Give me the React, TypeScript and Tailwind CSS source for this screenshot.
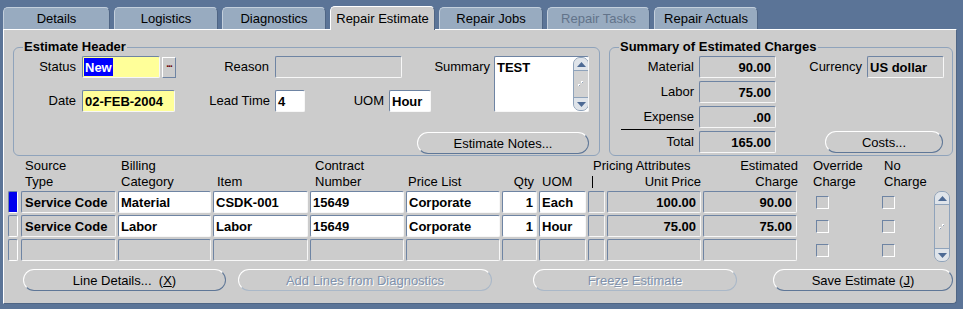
import React from "react";

type P = { className?: string; children?: React.ReactNode };

// inset text item (Oracle Forms look)
function Box({ className = "", children }: P) {
  return (
    <div
      className={`flex items-center overflow-hidden whitespace-nowrap rounded-[2px] border border-t-[#6e84a3] border-l-[#6e84a3] border-r-[#f7f7f7] border-b-[#f7f7f7] text-[13px] font-bold leading-none text-black ${className}`}
    >
      {children}
    </div>
  );
}

function Group({ title, className = "", children }: P & { title: string }) {
  return (
    <div className={`relative rounded-[6px] border border-[#8fa3bb] ${className}`}>
      <span className="absolute -top-[10px] left-[9px] bg-[#cccccc] px-[1px] text-[13px] font-bold leading-[18px]">
        {title}
      </span>
      {children}
    </div>
  );
}

function Btn({ className = "", disabled, children }: P & { disabled?: boolean }) {
  return (
    <div
      className={`flex h-[22px] items-center justify-center rounded-[11px] border text-[13px] leading-none ${
        disabled
          ? "border-t-white border-l-white border-r-[#aab8c8] border-b-[#aab8c8] text-[#8092ac] [text-shadow:1px_1px_0_#ffffff]"
          : "border-t-white border-l-white border-r-[#5f7797] border-b-[#5f7797] text-black"
      } ${className}`}
    >
      {children}
    </div>
  );
}

function Arrow({ down }: { down?: boolean }) {
  return (
    <svg width="9" height="5" viewBox="0 0 9 5">
      <path d={down ? "M0 0 L9 0 L4.5 5Z" : "M0 5 L4.5 0 L9 5Z"} fill="#4d6a94" />
    </svg>
  );
}

function Grip() {
  return (
    <svg width="6" height="6" viewBox="0 0 6 6">
      <rect x="3" y="0" width="2" height="2" fill="#ffffff" />
      <rect x="4" y="1" width="1" height="1" fill="#8fa3bb" />
      <rect x="0" y="3" width="2" height="2" fill="#ffffff" />
      <rect x="1" y="4" width="1" height="1" fill="#8fa3bb" />
    </svg>
  );
}

function Scroll({ className = "" }: P) {
  return (
    <div className={`flex w-[16px] flex-col rounded-[7px] border border-[#8fa3bb] bg-[#d2d2d2] ${className}`}>
      <div className="flex h-[13px] items-center justify-center rounded-t-[6px] border-b border-[#8fa3bb] bg-[#dfe4ea]">
        <Arrow />
      </div>
      <div className="flex flex-1 items-center justify-center">
        <Grip />
      </div>
      <div className="flex h-[13px] items-center justify-center rounded-b-[6px] border-t border-[#8fa3bb] bg-[#dfe4ea]">
        <Arrow down />
      </div>
    </div>
  );
}

function Check() {
  return (
    <div className="h-[13px] w-[13px] border border-t-[#6e84a3] border-l-[#6e84a3] border-r-white border-b-white bg-[#cccccc]" />
  );
}

const tabs = [
  { name: "Details", w: "w-[107px]" },
  { name: "Logistics", w: "w-[104px]" },
  { name: "Diagnostics", w: "w-[104px]" },
  { name: "Repair Estimate", w: "w-[105px]", active: true },
  { name: "Repair Jobs", w: "w-[104px]" },
  { name: "Repair Tasks", w: "w-[103px]", disabled: true },
  { name: "Repair Actuals", w: "w-[104px]" },
];

const lines = [
  ["Service Code", "Material", "CSDK-001", "15649", "Corporate", "1", "Each", "100.00", "90.00"],
  ["Service Code", "Labor", "Labor", "15649", "Corporate", "1", "Hour", "75.00", "75.00"],
];

export default function App() {
  return (
    <div className="h-[309px] w-[963px] overflow-hidden bg-[#5b7497] font-['Liberation_Sans',Arial,sans-serif] text-black">
      {/* tabs */}
      <div className="flex h-[29px] items-end gap-[4px] pl-[3px]">
        {tabs.map((t) =>
          t.active ? (
            <div
              key={t.name}
              className={`relative z-10 -mb-[1px] flex h-[24px] items-center justify-center rounded-t-[5px] border-t border-l border-r border-t-white border-l-white border-r-[#4f6584] bg-[#cccccc] text-[13px] ${t.w}`}
            >
              {t.name}
            </div>
          ) : (
            <div
              key={t.name}
              className={`flex h-[22px] items-center justify-center rounded-t-[5px] border-t border-l border-r border-t-[#c3cfdc] border-l-[#c3cfdc] border-r-[#4f6584] bg-[#98abc0] text-[13px] ${t.w} ${
                t.disabled ? "text-[#62738a]" : "text-black"
              }`}
            >
              {t.name}
            </div>
          )
        )}
      </div>

      {/* canvas */}
      <div className="ml-[3px] h-[275px] w-[954px] rounded-br-[4px] border border-t-white border-l-white border-r-[#4f6584] border-b-[#4f6584] bg-[#cccccc]">
        <div className="mt-[17px] flex">
          <Group title="Estimate Header" className="ml-[9px] h-[109px] w-[587px]">
            <div className="flex pt-[8px]">
              <div className="flex flex-col gap-[12px]">
                <div className="flex h-[22px] items-center text-[13px]">
                  <span className="w-[68px] pr-[6px] text-right">Status</span>
                  <Box className="h-[22px] w-[78px] bg-[#ffff99] py-[1px] pl-[1px]">
                    <span className="flex h-full items-center bg-[#0000ff] px-[1px] text-white">New</span>
                  </Box>
                  <div className="ml-[2px] flex h-[21px] w-[14px] items-start justify-center border border-t-white border-l-white border-r-[#6e84a3] border-b-[#6e84a3] pt-[2px] text-[10px] font-bold leading-[8px] tracking-[-1px] text-[#6b0000]">
                    ...
                  </div>
                  <span className="w-[99px] pr-[6px] text-right">Reason</span>
                  <Box className="h-[22px] w-[127px] bg-[#cccccc]" />
                  <span className="w-[92px] pr-[4px] text-right">Summary</span>
                </div>
                <div className="flex h-[22px] items-center text-[13px]">
                  <span className="w-[68px] pr-[6px] text-right">Date</span>
                  <Box className="h-[22px] w-[93px] bg-[#ffff99] pl-[2px]">02-FEB-2004</Box>
                  <span className="w-[100px] pr-[5px] text-right">Lead Time</span>
                  <Box className="h-[22px] w-[30px] bg-white pl-[2px]">4</Box>
                  <span className="w-[84px] pr-[5px] text-right">UOM</span>
                  <Box className="h-[22px] w-[42px] bg-white pl-[2px]">Hour</Box>
                </div>
              </div>
              <Box className="h-[56px] w-[95px] items-stretch bg-white">
                <div className="flex-1 pl-[2px] pt-[4px]">TEST</div>
                <Scroll className="mr-[-1px] rounded-[5px]" />
              </Box>
            </div>
            <div className="mt-[20px] flex justify-end pr-[10px]">
              <Btn className="h-[21px] w-[172px]">Estimate Notes...</Btn>
            </div>
          </Group>

          <Group title="Summary of Estimated Charges" className="ml-[9px] h-[109px] w-[344px]">
            <div className="flex flex-col gap-[3px] pt-[8px] text-[13px]">
              <div className="flex h-[22px] items-center">
                <span className="w-[89px] pr-[5px] text-right">Material</span>
                <Box className="h-[22px] w-[77px] justify-end bg-[#cccccc] pr-[4px]">90.00</Box>
                <span className="w-[91px] pr-[5px] text-right">Currency</span>
                <Box className="h-[22px] w-[77px] bg-[#cccccc] pl-[2px]">US dollar</Box>
              </div>
              <div className="flex h-[22px] items-center">
                <span className="w-[89px] pr-[5px] text-right">Labor</span>
                <Box className="h-[22px] w-[77px] justify-end bg-[#cccccc] pr-[4px]">75.00</Box>
              </div>
              <div className="flex h-[22px] items-start">
                <div className="flex h-[24px] w-[89px] justify-end pr-[5px]">
                  <span className="flex h-[24px] w-[73px] items-center justify-end border-b border-black pb-[1px]">Expense</span>
                </div>
                <Box className="h-[22px] w-[77px] justify-end bg-[#cccccc] pr-[4px]">.00</Box>
              </div>
              <div className="flex h-[22px] items-center">
                <span className="w-[89px] pr-[5px] text-right">Total</span>
                <Box className="h-[22px] w-[77px] justify-end bg-[#cccccc] pr-[4px]">165.00</Box>
                <Btn className="ml-[49px] h-[21px] w-[118px]">Costs...</Btn>
              </div>
            </div>
          </Group>
        </div>

        {/* multi-row block header */}
        <div className="mt-[2px] flex text-[13px] leading-[16px]">
          <div className="ml-[4px] mr-[3px] w-[10px]" />
          <div className="w-[95px] pl-[4px]">Source<br />Type</div>
          <div className="ml-[2px] w-[93px] pl-[3px]">Billing<br />Category</div>
          <div className="ml-[2px] w-[95px] pl-[4px]"><br />Item</div>
          <div className="ml-[2px] w-[94px] pl-[5px]">Contract<br />Number</div>
          <div className="ml-[2px] w-[94px] pl-[2px]"><br />Price List</div>
          <div className="ml-[2px] w-[35px] pr-[3px] text-right"><br />Qty</div>
          <div className="ml-[2px] w-[47px] pl-[3px]"><br />UOM</div>
          <div className="ml-[2px] w-[113px]">
            <div className="pl-[5px]">Pricing Attributes</div>
            <div className="flex h-[16px] items-center justify-between">
              <span className="ml-[4px] h-[12px] w-[1px] bg-black" />
              <span>Unit Price</span>
            </div>
          </div>
          <div className="ml-[2px] w-[95px] text-right">Estimated<br />Charge</div>
          <div className="ml-[15px] w-[68px]">Override<br />Charge</div>
          <div className="w-[50px] pl-[3px]">No<br />Charge</div>
        </div>

        <div className="mt-[1px] flex">
          <div className="flex flex-col gap-[2px]">
            {[0, 1, 2].map((i) => {
              const r = lines[i];
              const white = r ? "bg-white" : "bg-[#cccccc]";
              return (
                <div key={i} className="flex h-[22px] items-center">
                  <div
                    className={`ml-[4px] mr-[3px] h-[22px] w-[10px] rounded-[2px] border ${
                      i === 0
                        ? "border-t-[#6e84a3] border-l-[#6e84a3] border-r-white border-b-white bg-[#0000ee]"
                        : "border-t-[#6e84a3] border-l-[#6e84a3] border-r-white border-b-white bg-[#cccccc]"
                    }`}
                  />
                  <Box className="h-[22px] w-[95px] bg-[#cccccc] pl-[3px]">{r?.[0]}</Box>
                  <Box className={`ml-[2px] h-[22px] w-[93px] pl-[2px] ${white}`}>{r?.[1]}</Box>
                  <Box className={`ml-[2px] h-[22px] w-[95px] pl-[2px] ${white}`}>{r?.[2]}</Box>
                  <Box className={`ml-[2px] h-[22px] w-[94px] pl-[2px] ${white}`}>{r?.[3]}</Box>
                  <Box className={`ml-[2px] h-[22px] w-[94px] pl-[2px] ${white}`}>{r?.[4]}</Box>
                  <Box className={`ml-[2px] h-[22px] w-[35px] justify-end pr-[3px] ${white}`}>{r?.[5]}</Box>
                  <Box className={`ml-[2px] h-[22px] w-[47px] pl-[2px] ${white}`}>{r?.[6]}</Box>
                  <Box className="ml-[2px] h-[22px] w-[17px] bg-[#cccccc]" />
                  <Box className="ml-[2px] h-[22px] w-[94px] justify-end bg-[#cccccc] pr-[4px]">{r?.[7]}</Box>
                  <Box className="ml-[2px] h-[22px] w-[94px] justify-end bg-[#cccccc] pr-[4px]">{r?.[8]}</Box>
                  <div className="ml-[19px] w-[66px]">
                    <Check />
                  </div>
                  <div className="w-[50px]">
                    <Check />
                  </div>
                </div>
              );
            })}
          </div>
          <Scroll className="ml-[2px] h-[71px]" />
        </div>

        <div className="mt-[7px] flex">
          <Btn className="ml-[19px] w-[203px]">
            Line Details...&nbsp;&nbsp;(<span className="underline">X</span>)
          </Btn>
          <Btn disabled className="ml-[12px] w-[254px]">
            Add Lines from Diagnostics
          </Btn>
          <Btn disabled className="ml-[41px] w-[204px]">
            Free<span className="underline">z</span>e Estimate
          </Btn>
          <Btn className="ml-[36px] w-[180px]">
            Save Estimate (<span className="underline">J</span>)
          </Btn>
        </div>
      </div>
    </div>
  );
}
